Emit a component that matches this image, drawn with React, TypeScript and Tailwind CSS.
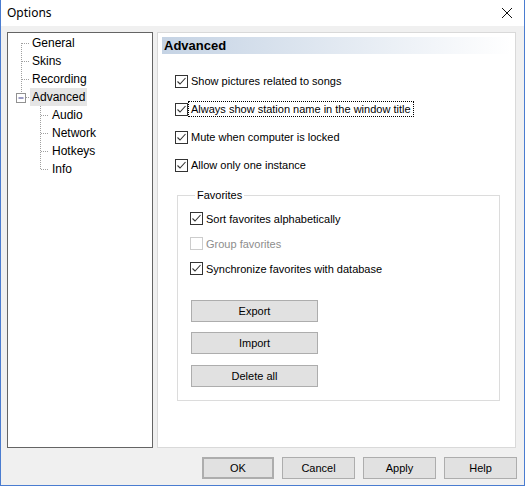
import React from "react";

const font = { fontFamily: '"Liberation Sans", Arial, sans-serif' };

function Check({ checked = true, disabled = false }: { checked?: boolean; disabled?: boolean }) {
  return (
    <div
      className={`w-[13px] h-[13px] shrink-0 bg-white border ${disabled ? "border-[#cccccc]" : "border-[#333333]"} flex items-center justify-center`}
    >
      {checked && (
        <svg width="11" height="11" viewBox="0 0 11 11">
          <polyline points="1.5,5.5 4,8 9.5,2" fill="none" stroke="#333333" strokeWidth="1.1" />
        </svg>
      )}
    </div>
  );
}

function Row({
  label,
  checked = true,
  disabled = false,
  focus = false,
  h = "h-[28px]",
}: {
  label: string;
  checked?: boolean;
  disabled?: boolean;
  focus?: boolean;
  h?: string;
}) {
  return (
    <div className={`flex items-center ${h}`}>
      <Check checked={checked} disabled={disabled} />
      <span
        className={`text-[11px] leading-[14px] px-[2px] border ${disabled ? "text-[#8d8d8d]" : "text-black"} ${
          focus ? "border-dotted border-black" : "border-transparent"
        }`}
      >
        {label}
      </span>
    </div>
  );
}

function Btn({ label, cls = "" }: { label: string; cls?: string }) {
  return (
    <div
      className={`h-[22px] flex items-center justify-center bg-[#e1e1e1] border border-[#adadad] text-[11px] text-black ${cls}`}
    >
      {label}
    </div>
  );
}

export default function App() {
  const items: { label: string; child?: boolean; sel?: boolean }[] = [
    { label: "General" },
    { label: "Skins" },
    { label: "Recording" },
    { label: "Advanced", sel: true },
    { label: "Audio", child: true },
    { label: "Network", child: true },
    { label: "Hotkeys", child: true },
    { label: "Info", child: true },
  ];
  return (
    <div
      className="w-[525px] h-[486px] bg-[#f0f0f0] border-x border-b border-[#4a7cd0] flex flex-col"
      style={font}
    >
      {/* Title bar */}
      <div className="h-[26px] bg-white flex items-center justify-between pl-[6px] pr-[11px] shrink-0">
        <span className="text-[12px] text-black" style={{ fontFamily: '"Noto Sans", "Open Sans", sans-serif' }}>
          Options
        </span>
        <svg width="12" height="12" viewBox="0 0 12 12">
          <path d="M1 1 L11 11 M11 1 L1 11" stroke="#111" strokeWidth="1" fill="none" />
        </svg>
      </div>

      {/* Body */}
      <div className="flex pt-[6px] pl-[6px] pr-[8px] gap-[4px] h-[422px] shrink-0">
        {/* Tree */}
        <div className="relative w-[146px] h-[416px] bg-white border border-[#646464] pt-[1px]">
          <svg className="absolute left-0 top-0" width="60" height="150" viewBox="0 0 60 150">
            <g stroke="#a0a0a0" strokeWidth="1" strokeDasharray="1 1" fill="none">
              <line x1="13.5" y1="10" x2="13.5" y2="61" />
              <line x1="14" y1="10.5" x2="22" y2="10.5" />
              <line x1="14" y1="28.5" x2="22" y2="28.5" />
              <line x1="14" y1="46.5" x2="22" y2="46.5" />
              <line x1="18" y1="64.5" x2="22" y2="64.5" />
              <line x1="32.5" y1="71" x2="32.5" y2="136" />
              <line x1="33" y1="82.5" x2="41" y2="82.5" />
              <line x1="33" y1="100.5" x2="41" y2="100.5" />
              <line x1="33" y1="118.5" x2="41" y2="118.5" />
              <line x1="33" y1="136.5" x2="41" y2="136.5" />
            </g>
            <rect x="8.5" y="60.5" width="9" height="9" fill="white" stroke="#919191" />
            <line x1="10.5" y1="65" x2="15.5" y2="65" stroke="#3a3a8a" strokeWidth="1" />
          </svg>
          {items.map((it) => (
            <div
              key={it.label}
              className={`relative h-[18px] flex items-center ${it.child ? "pl-[42px]" : "pl-[22px]"}`}
            >
              <span
                className={`h-[18px] flex items-center px-[2px] text-[12px] text-black ${
                  it.sel ? "bg-[#e5e5e5]" : ""
                }`}
              >
                {it.label}
              </span>
            </div>
          ))}
        </div>

        {/* Panel */}
        <div className="relative w-[359px] h-[416px] bg-white border border-[#d9d9d9] px-[4px] pt-[4px] flex flex-col">
          <div className="h-[17px] flex items-center pl-[2px] bg-gradient-to-r from-[#c5d3e4] to-white">
            <span className="text-[13px] font-bold text-black">Advanced</span>
          </div>
          <div className="mt-[13px] ml-[13px] flex flex-col">
            <Row label="Show pictures related to songs" />
            <Row label="Always show station name in the window title" focus />
            <Row label="Mute when computer is locked" />
            <Row label="Allow only one instance" />
          </div>
          <fieldset className="mt-[9px] ml-[15px] mr-[11px] border border-[#dcdcdc] pl-[12px] pb-[13px] pt-[4px]">
            <legend className="ml-[5px] px-[2px] text-[11px] leading-[14px] text-black">Favorites</legend>
            <Row label="Sort favorites alphabetically" h="h-[25px]" />
            <Row label="Group favorites" checked={false} disabled h="h-[25px]" />
            <Row label="Synchronize favorites with database" h="h-[25px]" />
            <div className="ml-[1px] mt-[19px] flex flex-col gap-[10px] w-[127px]">
              <Btn label="Export" />
              <Btn label="Import" />
              <Btn label="Delete all" cls="mt-[1px]" />
            </div>
          </fieldset>
        </div>
      </div>

      {/* Bottom buttons */}
      <div className="flex justify-end gap-[8px] pt-[9px] pr-[7px]">
        <Btn label="OK" cls="w-[72px] border-2 border-[#0078d7]" />
        <Btn label="Cancel" cls="w-[73px]" />
        <Btn label="Apply" cls="w-[73px]" />
        <Btn label="Help" cls="w-[73px]" />
      </div>
    </div>
  );
}
